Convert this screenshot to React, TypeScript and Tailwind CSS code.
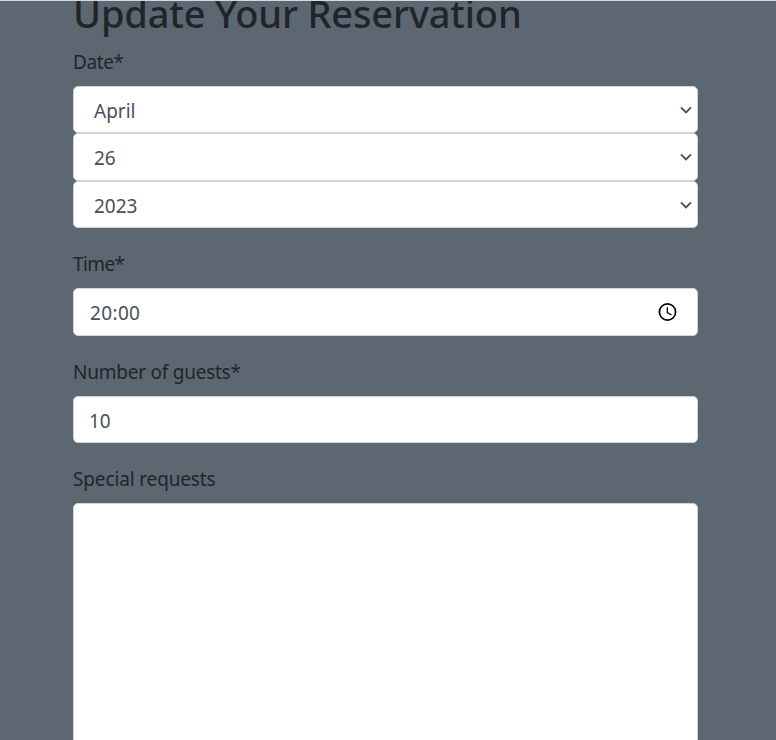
import type { ReactNode } from "react";

const control =
  "w-full flex items-center rounded-[5px] border border-[#ced4da] bg-white text-[#495057]";

function Chevron() {
  return (
    <svg className="mr-[5px] h-3 w-3 shrink-0" viewBox="0 0 12 12" fill="none" stroke="#495057" strokeWidth="1.9">
      <path d="M1 3.3 6 8.3 11 3.3" />
    </svg>
  );
}

function Clock() {
  return (
    <svg className="mr-[19px] mb-px h-5 w-5 shrink-0" viewBox="0 0 20 20" fill="none" stroke="#000">
      <circle cx="9.5" cy="10" r="8.1" strokeWidth="1.7" />
      <path d="M9.3 5.2V10.6L13.5 13" strokeWidth="1.3" />
    </svg>
  );
}

function Label({ className = "", children }: { className?: string; children: ReactNode }) {
  return (
    <div className={`h-[30px] leading-[30px] whitespace-nowrap text-[#212529] ${className}`}>{children}</div>
  );
}

export default function App() {
  return (
    <div className="h-[740px] w-full overflow-hidden border-t border-[#cfdde3] bg-[#5d6771] font-['Noto_Sans',sans-serif] text-[19px]">
      <main className="ml-[73px] w-[625px]">
        <h2 className="-mt-[15px] h-[61px] text-[38px] leading-[54px] font-medium tracking-[-0.16px] whitespace-nowrap text-[#212529]">
          Update Your Reservation
        </h2>
        <Label className="tracking-[-0.4px]">Date*</Label>
        <div className="mt-[9px]">
          <div className={`${control} h-[47px] justify-between pl-5`}>
            <span className="pt-[3px]">April</span>
            <Chevron />
          </div>
          <div className={`${control} h-[48px] justify-between pl-5`}>
            <span className="pt-[2px]">26</span>
            <Chevron />
          </div>
          <div className={`${control} h-[47px] justify-between pl-5`}>
            <span className="pt-[3px]">2023</span>
            <Chevron />
          </div>
        </div>
        <div className="mt-[21px]">
          <Label className="tracking-[-0.6px]">Time*</Label>
          <div className={`${control} mt-[9px] h-[48px] justify-between pl-4`}>
            <span className="pt-[2px] tracking-[0.35px]">20:00</span>
            <Clock />
          </div>
        </div>
        <div className="mt-[21px]">
          <Label className="tracking-[-0.24px]">Number of guests*</Label>
          <div className={`${control} mt-[9px] h-[47px] pl-[15px]`}>
            <span className="pt-[3px]">10</span>
          </div>
        </div>
        <div className="mt-[21px]">
          <Label className="tracking-[-0.14px]">Special requests</Label>
          <div className={`${control} mt-[9px] h-[300px]`} />
        </div>
      </main>
    </div>
  );
}
